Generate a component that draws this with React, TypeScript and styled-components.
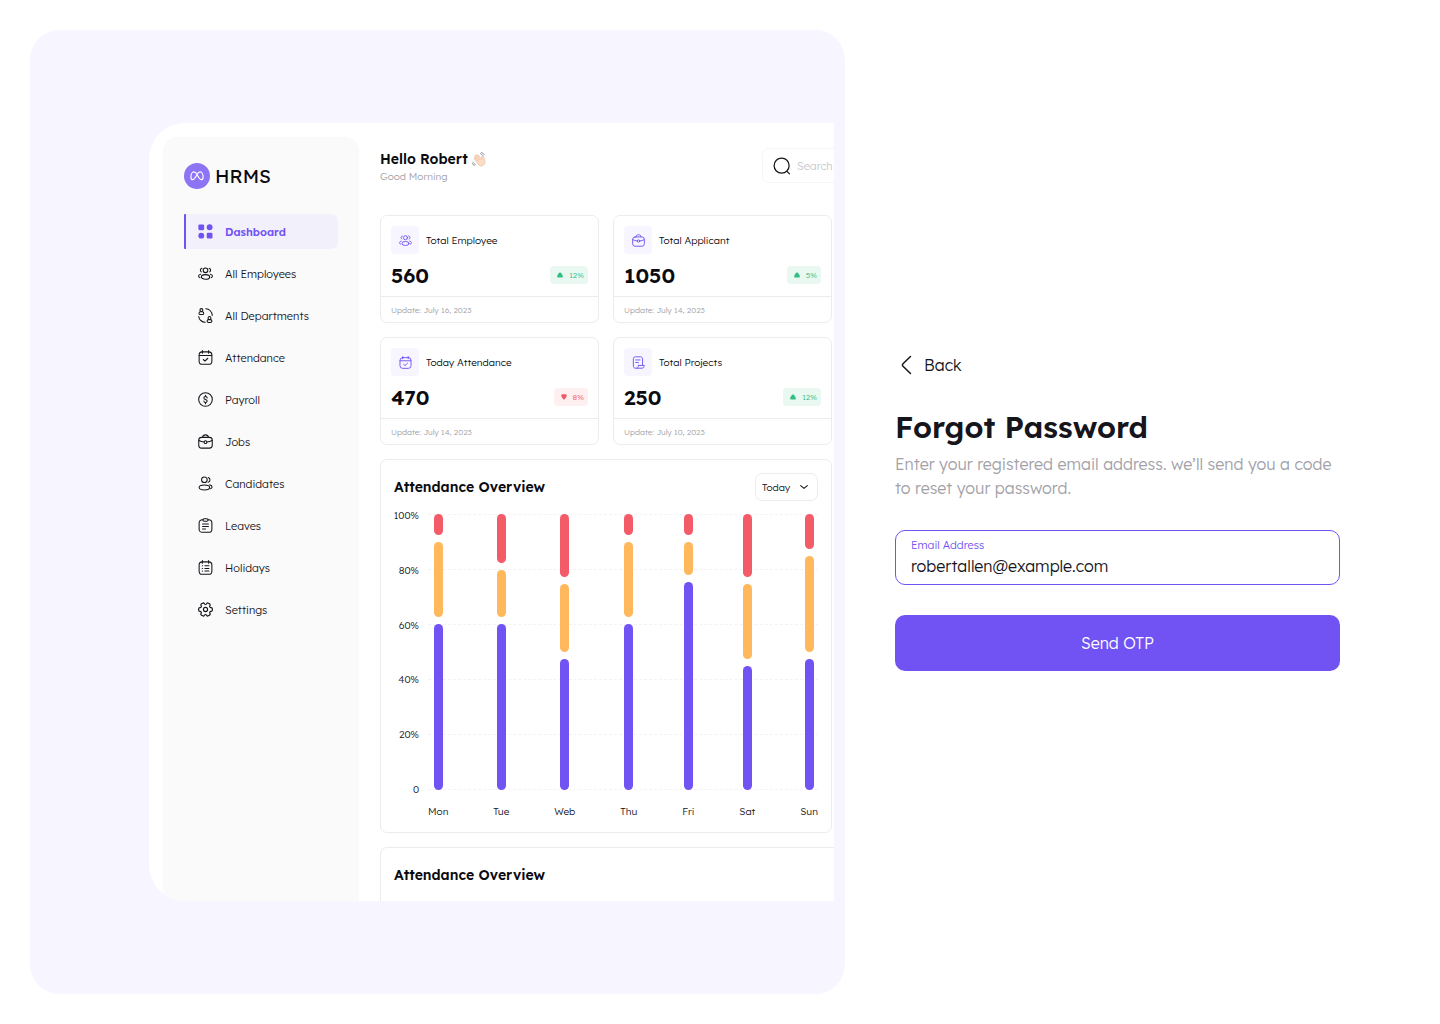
import React from "react";
import styled, { createGlobalStyle } from "styled-components";

const color = {
  primary: "#7152f3",
  ink: "#16151c",
  black: "#0b0b0f",
  muted: "#a2a1a8",
  line: "#ececee",
  tint: "#f7f5ff",
  green: "#30be82",
  red: "#f45b69",
  orange: "#ffb85b",
};

const GlobalStyle = createGlobalStyle`
  *, *::before, *::after { box-sizing: border-box; }
  body {
    margin: 0;
    background: #fff;
    color: ${color.ink};
    font-family: Lexend, Inter, "Liberation Sans", sans-serif;
  }
  h1, h2, p { margin: 0; }
  a { color: inherit; text-decoration: none; }
  button, input, select { font-family: inherit; }
`;

/* ---------- Icons ---------- */

type IconName =
  | "grid"
  | "people"
  | "departments"
  | "calendar"
  | "payroll"
  | "briefcase"
  | "candidates"
  | "clipboard"
  | "holidays"
  | "settings"
  | "scroll"
  | "search"
  | "chevronDown"
  | "chevronLeft";

const glyphs: Record<IconName, React.ReactNode> = {
  grid: (
    <g fill="currentColor" stroke="none">
      <rect x="0.600" y="0.600" width="9.200" height="9.200" rx="1.800" />
      <circle cx="18.600" cy="5.200" r="4.700" />
      <circle cx="5.200" cy="18.600" r="4.700" />
      <rect x="14" y="14" width="9.200" height="9.200" rx="1.800" />
    </g>
  ),
  people: (
    <>
      <circle cx="12" cy="6.900" r="3.700" />
      <ellipse cx="12" cy="17.500" rx="6.600" ry="3.700" />
      <path d="M6.200 3.700A3.100 3.100 0 0 0 5.300 9.400" />
      <path d="M17.800 3.700a3.100 3.100 0 0 1 .9 5.700" />
      <path d="M4.200 13.200c-1.900.5-3.300 1.500-3.300 2.900 0 1.200.9 2.100 2.300 2.600" />
      <path d="M19.800 13.200c1.900.5 3.300 1.500 3.300 2.900 0 1.200-.9 2.100-2.300 2.600" />
    </>
  ),
  departments: (
    <>
      <circle cx="5.400" cy="3.300" r="2.300" />
      <rect x="1.600" y="5.900" width="7.600" height="4.600" rx="2.300" />
      <circle cx="18.400" cy="16" r="2.300" />
      <rect x="14.600" y="18.600" width="7.600" height="4.600" rx="2.300" />
      <path d="M12.500 1.200C18 1.400 22.700 6 22.800 11.800" />
      <path d="M1.200 13.500C1.700 18.600 6 22.700 11.500 22.800" />
    </>
  ),
  calendar: (
    <>
      <rect x="1.800" y="3" width="20.400" height="19.800" rx="5" />
      <path d="M2 8.800h20M7 1v4M17 1v4M8.500 15.200l2.600 2.500 4.600-4.500" />
    </>
  ),
  payroll: (
    <>
      <circle cx="12" cy="12" r="10.900" />
      <path d="M14.600 9.600c0-1.400-1.100-2.300-2.600-2.300s-2.600.9-2.600 2.300c0 3.200 5.200 1.600 5.200 4.800 0 1.400-1.100 2.300-2.600 2.300s-2.600-.9-2.600-2.300M12 5.300v2M12 16.700v2" />
    </>
  ),
  briefcase: (
    <>
      <rect x="1.200" y="5.400" width="21.600" height="17.200" rx="4.500" />
      <path d="M7.500 5.200C7.600 2.600 9 1.400 12 1.400s4.400 1.200 4.500 3.800" />
      <path d="M1.400 10.400c2.700 1.500 5.500 2.300 8.300 2.500M22.600 10.400c-2.700 1.500-5.500 2.300-8.300 2.500" />
      <circle cx="12" cy="13" r="2.200" />
    </>
  ),
  candidates: (
    <>
      <circle cx="10.200" cy="6" r="4.500" />
      <ellipse cx="10.200" cy="18.500" rx="8.400" ry="4" />
      <path d="M16.300 2.300a4.100 4.100 0 0 1 0 7.800M18.700 14.200c2.300.5 3.800 1.700 3.800 3.300 0 1.300-.9 2.200-2.400 2.800" />
    </>
  ),
  clipboard: (
    <>
      <path d="M8 2.800H6.800a5 5 0 0 0-5 5v10a5 5 0 0 0 5 5h10.400a5 5 0 0 0 5-5v-10a5 5 0 0 0-5-5H16" />
      <rect x="7.800" y="1.100" width="8.400" height="4" rx="2" />
      <path d="M7.300 9.700h9.400M7.300 13.700h9.400M7.300 17.700h4.700" />
    </>
  ),
  holidays: (
    <>
      <rect x="1.800" y="3" width="20.400" height="19.800" rx="5" />
      <path d="M7 1v4M17 1v4M11 9.300h6.500M11 13.500h6.500M11 17.700h6.500M6.800 9.300h.5M6.800 13.500h.5M6.800 17.700h.5" />
    </>
  ),
  settings: (
    <g transform="translate(-1.200 -1.200) scale(1.100)">
      <path d="M2 12.880v-1.760c0-1.040.85-1.900 1.900-1.900 1.810 0 2.550-1.280 1.640-2.850-.52-.9-.21-2.070.7-2.590l1.730-.99c.79-.47 1.810-.19 2.280.6l.11.19c.9 1.570 2.380 1.570 3.290 0l.11-.19c.47-.79 1.490-1.070 2.280-.6l1.730.99c.91.52 1.220 1.690.7 2.590-.91 1.570-.17 2.850 1.640 2.850 1.040 0 1.900.85 1.900 1.900v1.760c0 1.040-.85 1.900-1.900 1.900-1.810 0-2.550 1.280-1.640 2.850.52.91.21 2.070-.7 2.590l-1.730.99c-.79.47-1.810.19-2.280-.6l-.11-.19c-.9-1.570-2.380-1.570-3.290 0l-.11.19c-.47.79-1.490 1.070-2.280.6l-1.730-.99c-.91-.52-1.220-1.680-.7-2.590.91-1.570.17-2.850-1.640-2.850-1.050 0-1.900-.86-1.900-1.900Z" />
      <circle cx="12" cy="12" r="3" />
    </g>
  ),
  scroll: (
    <>
      <path d="M8.500 22.500H6.300c-2.200 0-3.800-1.700-3.800-3.800V5.300c0-2.200 1.600-3.800 3.800-3.800h9.400c2.200 0 3.800 1.600 3.800 3.800v12" />
      <path d="M12 17.400h10.600c0 3-1.500 5.100-4 5.100H8.400c2 0 3.600-2 3.600-5.100Z" />
      <path d="M6.800 7.300h8M6.800 12h5" />
    </>
  ),
  search: (
    <>
      <circle cx="11.500" cy="11.500" r="10" />
      <path d="M19 19.500l3 3" />
    </>
  ),
  chevronDown: <path d="M4 8.500l8 7 8-7" />,
  chevronLeft: <path d="M15.500 3.500L8 10.700c-.8.800-.8 1.800 0 2.600l7.500 7.200" />,
};

const Svg = styled.svg`
  display: block;
  flex: none;
  fill: none;
  stroke: currentColor;
  stroke-linecap: round;
  stroke-linejoin: round;
`;

function Icon({ name, size, stroke = 1.7 }: { name: IconName; size: number; stroke?: number }) {
  return (
    <Svg width={size} height={size} viewBox="0 0 24 24" strokeWidth={stroke} aria-hidden="true">
      {glyphs[name]}
    </Svg>
  );
}

function WavingHand() {
  return (
    <Svg width={15} height={15} viewBox="0 0 32 32" role="img" aria-label="Waving hand">
      <g stroke="#e5b596" strokeWidth="1.200" fill="#fbdcc5">
        <path d="M9 20.500 4.700 14.600c-1.400-2 1.400-4 2.900-2.100L6.500 9.800C5 7.500 8 5.500 9.700 7.700l.5.700c-1-2.200 1.900-3.900 3.400-1.800l7.200 9.300-.3-4.900c-.3-2.900 3.700-3.600 4.400-.9l2.400 8.200c1.300 4.700-.3 8.400-3.700 10.300-4.200 2.300-8.400 1-11.100-3Z" />
        <path d="M7.600 12.500l4.900 6M10.200 8.400l5.700 7.700" fill="none" />
      </g>
      <path
        d="M18 3.500c2.200.6 3.900 2 5 4M20.500 1c2.600.9 4.400 2.400 5.500 4.600M2.500 21.500c.9 2.600 2.500 4.300 4.800 5.200M.8 24.500c.8 2.200 2.200 3.700 4.200 4.500"
        stroke="#7d8590"
        strokeWidth="1.800"
      />
    </Svg>
  );
}

function TrendMark({ up }: { up: boolean }) {
  return (
    <Svg width={6} height={6} viewBox="0 0 12 12" aria-hidden="true">
      <path
        d={
          up
            ? "M6 .6C8.400 2.400 11.600 6 11.600 8.800c0 1.600-1 2.400-2.400 2.400H2.800C1.400 11.200.4 10.400.4 8.800.4 6 3.600 2.400 6 .6Z"
            : "M6 11.600C3.600 9.800.6 6.400.6 3.200.6 1.600 1.600.6 3 .6h6c1.400 0 2.400 1 2.400 2.600C11.400 6.400 8.400 9.800 6 11.600Z"
        }
        fill="currentColor"
        stroke="none"
      />
    </Svg>
  );
}

/* ---------- Page ---------- */

const Page = styled.div`
  display: flex;
  gap: 50px;
  min-height: 100vh;
  padding: 30px 100px 30px 30px;
`;

const Showcase = styled.section`
  flex: 1;
  min-width: 0;
  display: flex;
  height: calc(100vh - 60px);
  padding: 93px 11px 93px 119px;
  border-radius: 30px;
  background: ${color.tint};
`;

const Preview = styled.div`
  flex: 1;
  min-width: 0;
  display: flex;
  gap: 21px;
  padding: 14px 2px 0 14px;
  border-radius: 36px 0 0 36px;
  background: #fff;
  overflow: hidden;
`;

/* ---------- Sidebar ---------- */

const Sidebar = styled.aside`
  flex: none;
  width: 196px;
  padding: 26px 21px;
  border-radius: 14px 14px 0 0;
  background: #fafafa;
`;

const Brand = styled.div`
  display: flex;
  align-items: center;
  gap: 5px;
  height: 25px;
  margin-bottom: 26px;
  color: ${color.black};
  font-size: 19px;
  font-weight: 400;
`;

const Nav = styled.nav`
  display: flex;
  flex-direction: column;
  gap: 7px;
`;

const NavLink = styled.a<{ $active?: boolean }>`
  display: flex;
  align-items: center;
  gap: 12px;
  height: 35px;
  padding-left: 12px;
  border-left: 2px solid ${(p) => (p.$active ? color.primary : "transparent")};
  border-radius: ${(p) => (p.$active ? "1px 7px 7px 1px" : "0")};
  background: ${(p) => (p.$active ? "#f2f0fb" : "transparent")};
  color: ${(p) => (p.$active ? color.primary : color.ink)};
  font-size: 11px;
  font-weight: ${(p) => (p.$active ? 600 : 300)};
`;

const navItems: { label: string; icon: IconName }[] = [
  { label: "Dashboard", icon: "grid" },
  { label: "All Employees", icon: "people" },
  { label: "All Departments", icon: "departments" },
  { label: "Attendance", icon: "calendar" },
  { label: "Payroll", icon: "payroll" },
  { label: "Jobs", icon: "briefcase" },
  { label: "Candidates", icon: "candidates" },
  { label: "Leaves", icon: "clipboard" },
  { label: "Holidays", icon: "holidays" },
  { label: "Settings", icon: "settings" },
];

/* ---------- Dashboard ---------- */

const Main = styled.div`
  flex: 1;
  min-width: 0;
  display: flex;
  flex-direction: column;
  gap: 14px;
  padding-top: 11px;
`;

const TopBar = styled.header`
  flex: none;
  display: flex;
  justify-content: space-between;
  margin-bottom: 18px;
`;

const Greeting = styled.div`
  display: flex;
  flex-direction: column;
`;

const Hello = styled.p`
  display: flex;
  align-items: center;
  gap: 4px;
  color: ${color.black};
  font-size: 14px;
  line-height: 22px;
  font-weight: 600;
`;

const Small = styled.p`
  color: ${color.muted};
  font-size: 10px;
  line-height: 13px;
  font-weight: 300;
`;

const SearchBox = styled.label`
  display: flex;
  align-items: center;
  gap: 6px;
  width: 182px;
  height: 35px;
  margin-right: -112px;
  padding: 0 10px;
  border: 1px solid #f5f5f6;
  border-radius: 7px;
`;

const SearchInput = styled.input`
  flex: 1;
  min-width: 0;
  padding: 0;
  border: 0;
  outline: 0;
  background: transparent;
  font-size: 11px;
  font-weight: 300;
  &::placeholder { color: #c8c7cc; }
`;

const Stats = styled.div`
  flex: none;
  display: grid;
  grid-template-columns: 1fr 1fr;
  gap: 14px;
`;

const Card = styled.article`
  border: 1px solid ${color.line};
  border-radius: 7px;
`;

const CardBody = styled.div`
  display: flex;
  flex-direction: column;
  gap: 7px;
  padding: 10px 10px 7px;
`;

const CardTitle = styled.div`
  display: flex;
  align-items: center;
  gap: 7px;
  color: ${color.black};
  font-size: 10px;
  font-weight: 300;
`;

const Tile = styled.span`
  display: grid;
  place-items: center;
  width: 28px;
  height: 28px;
  border-radius: 4px;
  background: ${color.tint};
  color: ${color.primary};
`;

const Figures = styled.div`
  display: flex;
  align-items: center;
  justify-content: space-between;
`;

const Value = styled.strong`
  color: ${color.black};
  font-size: 21px;
  line-height: 28px;
  font-weight: 600;
`;

const Badge = styled.span<{ $up: boolean }>`
  display: flex;
  align-items: center;
  gap: 6px;
  height: 18px;
  padding: 0 4px 0 7px;
  border-radius: 4px;
  background: ${(p) => (p.$up ? "#eaf8f2" : "#feeff0")};
  color: ${(p) => (p.$up ? color.green : color.red)};
  font-size: 8px;
  font-weight: 300;
`;

const CardFoot = styled.div`
  padding: 2px 10px 0;
  border-top: 1px solid ${color.line};
  color: ${color.muted};
  font-size: 8px;
  line-height: 23px;
  font-weight: 300;
`;

const stats: { title: string; icon: IconName; value: string; change: string; up: boolean; date: string }[] = [
  { title: "Total Employee", icon: "people", value: "560", change: "12%", up: true, date: "July 16, 2023" },
  { title: "Total Applicant", icon: "briefcase", value: "1050", change: "5%", up: true, date: "July 14, 2023" },
  { title: "Today Attendance", icon: "calendar", value: "470", change: "8%", up: false, date: "July 14, 2023" },
  { title: "Total Projects", icon: "scroll", value: "250", change: "12%", up: true, date: "July 10, 2023" },
];

/* ---------- Chart ---------- */

const Panel = styled.section<{ $bleed?: boolean }>`
  flex: none;
  padding: 13px;
  border: 1px solid ${color.line};
  border-radius: 7px;
  ${(p) => p.$bleed && "margin-right: -40px; padding-bottom: 60px;"}
`;

const PanelHead = styled.div`
  display: flex;
  align-items: center;
  justify-content: space-between;
  height: 28px;
`;

const PanelTitle = styled.h2`
  color: ${color.black};
  font-size: 14px;
  line-height: 28px;
  font-weight: 600;
`;

const Period = styled.label`
  display: grid;
  align-items: center;
  width: 63px;
  height: 28px;
  border: 1px solid ${color.line};
  border-radius: 7px;
  > * { grid-area: 1 / 1; }
  > svg { justify-self: end; margin-right: 8px; pointer-events: none; }
`;

const PeriodSelect = styled.select`
  height: 26px;
  padding: 0 20px 0 6px;
  border: 0;
  outline: 0;
  appearance: none;
  background: transparent;
  color: ${color.ink};
  font-size: 10px;
  font-weight: 300;
`;

const Chart = styled.div`
  display: flex;
  gap: 9px;
  padding-top: 9px;
`;

const Axis = styled.div`
  display: flex;
  flex-direction: column;
  justify-content: space-between;
  align-items: flex-end;
  width: 25px;
  height: 286px;
  color: ${color.ink};
  font-size: 10px;
  line-height: 12px;
  font-weight: 300;
`;

const Plot = styled.div`
  flex: 1;
  display: grid;
  padding-top: 4px;
  > * { grid-area: 1 / 1; }
`;

const Lines = styled.div`
  display: flex;
  flex-direction: column;
  justify-content: space-between;
  height: 276px;
`;

const Line = styled.div`
  border-top: 1px dashed #f3f3f5;
`;

const Days = styled.div`
  display: flex;
  justify-content: space-between;
`;

const Day = styled.div`
  display: flex;
  flex-direction: column;
  align-items: center;
  gap: 15px;
  color: ${color.ink};
  font-size: 10px;
  line-height: 14px;
  font-weight: 300;
`;

const Stack = styled.div`
  display: flex;
  flex-direction: column;
  gap: 7px;
  width: 9px;
  height: 276px;
`;

const Segment = styled.div<{ $color: string }>`
  flex-basis: 0;
  border-radius: 5px;
  background: ${(p) => p.$color};
`;

const ticks = ["100%", "80%", "60%", "40%", "20%", "0"];

const week: { day: string; parts: [number, number, number] }[] = [
  { day: "Mon", parts: [21, 75, 166] },
  { day: "Tue", parts: [49, 47, 166] },
  { day: "Web", parts: [63, 68, 131] },
  { day: "Thu", parts: [21, 75, 166] },
  { day: "Fri", parts: [21, 33, 208] },
  { day: "Sat", parts: [63, 75, 124] },
  { day: "Sun", parts: [35, 96, 131] },
];

const segmentColors = [color.red, color.orange, color.primary];

/* ---------- Form ---------- */

const Form = styled.form`
  flex: none;
  align-self: center;
  display: flex;
  flex-direction: column;
  gap: 30px;
  width: 445px;
`;

const Back = styled.a`
  display: flex;
  align-items: center;
  align-self: flex-start;
  gap: 5px;
  font-size: 16px;
  line-height: 24px;
  font-weight: 300;
`;

const Intro = styled.div`
  display: flex;
  flex-direction: column;
  gap: 5px;
`;

const Title = styled.h1`
  font-size: 30px;
  line-height: 40px;
  font-weight: 600;
`;

const Lead = styled.p`
  color: ${color.muted};
  font-size: 16px;
  line-height: 24px;
  font-weight: 300;
`;

const Field = styled.div`
  display: flex;
  flex-direction: column;
  gap: 2px;
  padding: 7px 15px 6px;
  border: 1px solid ${color.primary};
  border-radius: 10px;
`;

const FieldLabel = styled.label`
  color: ${color.primary};
  font-size: 11px;
  line-height: 14px;
  font-weight: 300;
`;

const FieldInput = styled.input`
  height: 24px;
  padding: 0;
  border: 0;
  outline: 0;
  background: transparent;
  color: ${color.ink};
  font-size: 16px;
  font-weight: 300;
`;

const Submit = styled.button`
  height: 56px;
  border: 0;
  border-radius: 10px;
  background: ${color.primary};
  color: #fff;
  font-size: 16px;
  font-weight: 300;
  cursor: pointer;
`;

export default function App() {
  return (
    <>
      <GlobalStyle />
      <Page>
        <Showcase>
          <Preview>
            <Sidebar>
              <Brand>
                <Svg width={26} height={26} viewBox="0 0 26 26" aria-hidden="true">
                  <circle cx="13" cy="13" r="13" fill="#8c74f5" stroke="none" />
                  <path
                    d="M13 11.300C12 9.700 11 8.900 9.900 8.900c-1.800 0-3 2.500-3 5 0 1.700.7 2.800 1.900 2.800 1.500 0 2.500-1.700 4.200-5.100 1.100-2.100 2-2.700 3.100-2.700 1.800 0 3 2.500 3 5 0 1.700-.7 2.800-1.900 2.800-1.500 0-2.500-1.700-4.200-5.100"
                    stroke="#fff"
                    strokeWidth="1.200"
                  />
                </Svg>
                HRMS
              </Brand>
              <Nav aria-label="Main">
                {navItems.map((item, i) => (
                  <NavLink key={item.label} href="#" $active={i === 0}>
                    <Icon name={item.icon} size={15} />
                    {item.label}
                  </NavLink>
                ))}
              </Nav>
            </Sidebar>

            <Main>
              <TopBar>
                <Greeting>
                  <Hello>
                    Hello Robert <WavingHand />
                  </Hello>
                  <Small>Good Morning</Small>
                </Greeting>
                <SearchBox>
                  <Icon name="search" size={18} />
                  <SearchInput type="search" placeholder="Search" aria-label="Search" />
                </SearchBox>
              </TopBar>

              <Stats>
                {stats.map((s) => (
                  <Card key={s.title}>
                    <CardBody>
                      <CardTitle>
                        <Tile>
                          <Icon name={s.icon} size={13} />
                        </Tile>
                        {s.title}
                      </CardTitle>
                      <Figures>
                        <Value>{s.value}</Value>
                        <Badge $up={s.up}>
                          <TrendMark up={s.up} />
                          {s.change}
                        </Badge>
                      </Figures>
                    </CardBody>
                    <CardFoot>Update: {s.date}</CardFoot>
                  </Card>
                ))}
              </Stats>

              <Panel>
                <PanelHead>
                  <PanelTitle>Attendance Overview</PanelTitle>
                  <Period>
                    <PeriodSelect aria-label="Period" defaultValue="Today">
                      <option>Today</option>
                    </PeriodSelect>
                    <Icon name="chevronDown" size={10} stroke={2.5} />
                  </Period>
                </PanelHead>
                <Chart>
                  <Axis>
                    {ticks.map((t) => (
                      <span key={t}>{t}</span>
                    ))}
                  </Axis>
                  <Plot>
                    <Lines>
                      {ticks.map((t) => (
                        <Line key={t} />
                      ))}
                    </Lines>
                    <Days>
                      {week.map(({ day, parts }) => (
                        <Day key={day}>
                          <Stack>
                            {parts.map((n, i) => (
                              <Segment key={i} $color={segmentColors[i]} style={{ flexGrow: n }} />
                            ))}
                          </Stack>
                          {day}
                        </Day>
                      ))}
                    </Days>
                  </Plot>
                </Chart>
              </Panel>

              <Panel $bleed>
                <PanelHead>
                  <PanelTitle>Attendance Overview</PanelTitle>
                </PanelHead>
              </Panel>
            </Main>
          </Preview>
        </Showcase>

        <Form onSubmit={(e) => e.preventDefault()}>
          <Back href="#">
            <Icon name="chevronLeft" size={24} stroke={1.5} />
            Back
          </Back>
          <Intro>
            <Title>Forgot Password</Title>
            <Lead>Enter your registered email address. we’ll send you a code to reset your password.</Lead>
          </Intro>
          <Field>
            <FieldLabel htmlFor="email">Email Address</FieldLabel>
            <FieldInput id="email" type="email" defaultValue="robertallen@example.com" />
          </Field>
          <Submit type="submit">Send OTP</Submit>
        </Form>
      </Page>
    </>
  );
}
